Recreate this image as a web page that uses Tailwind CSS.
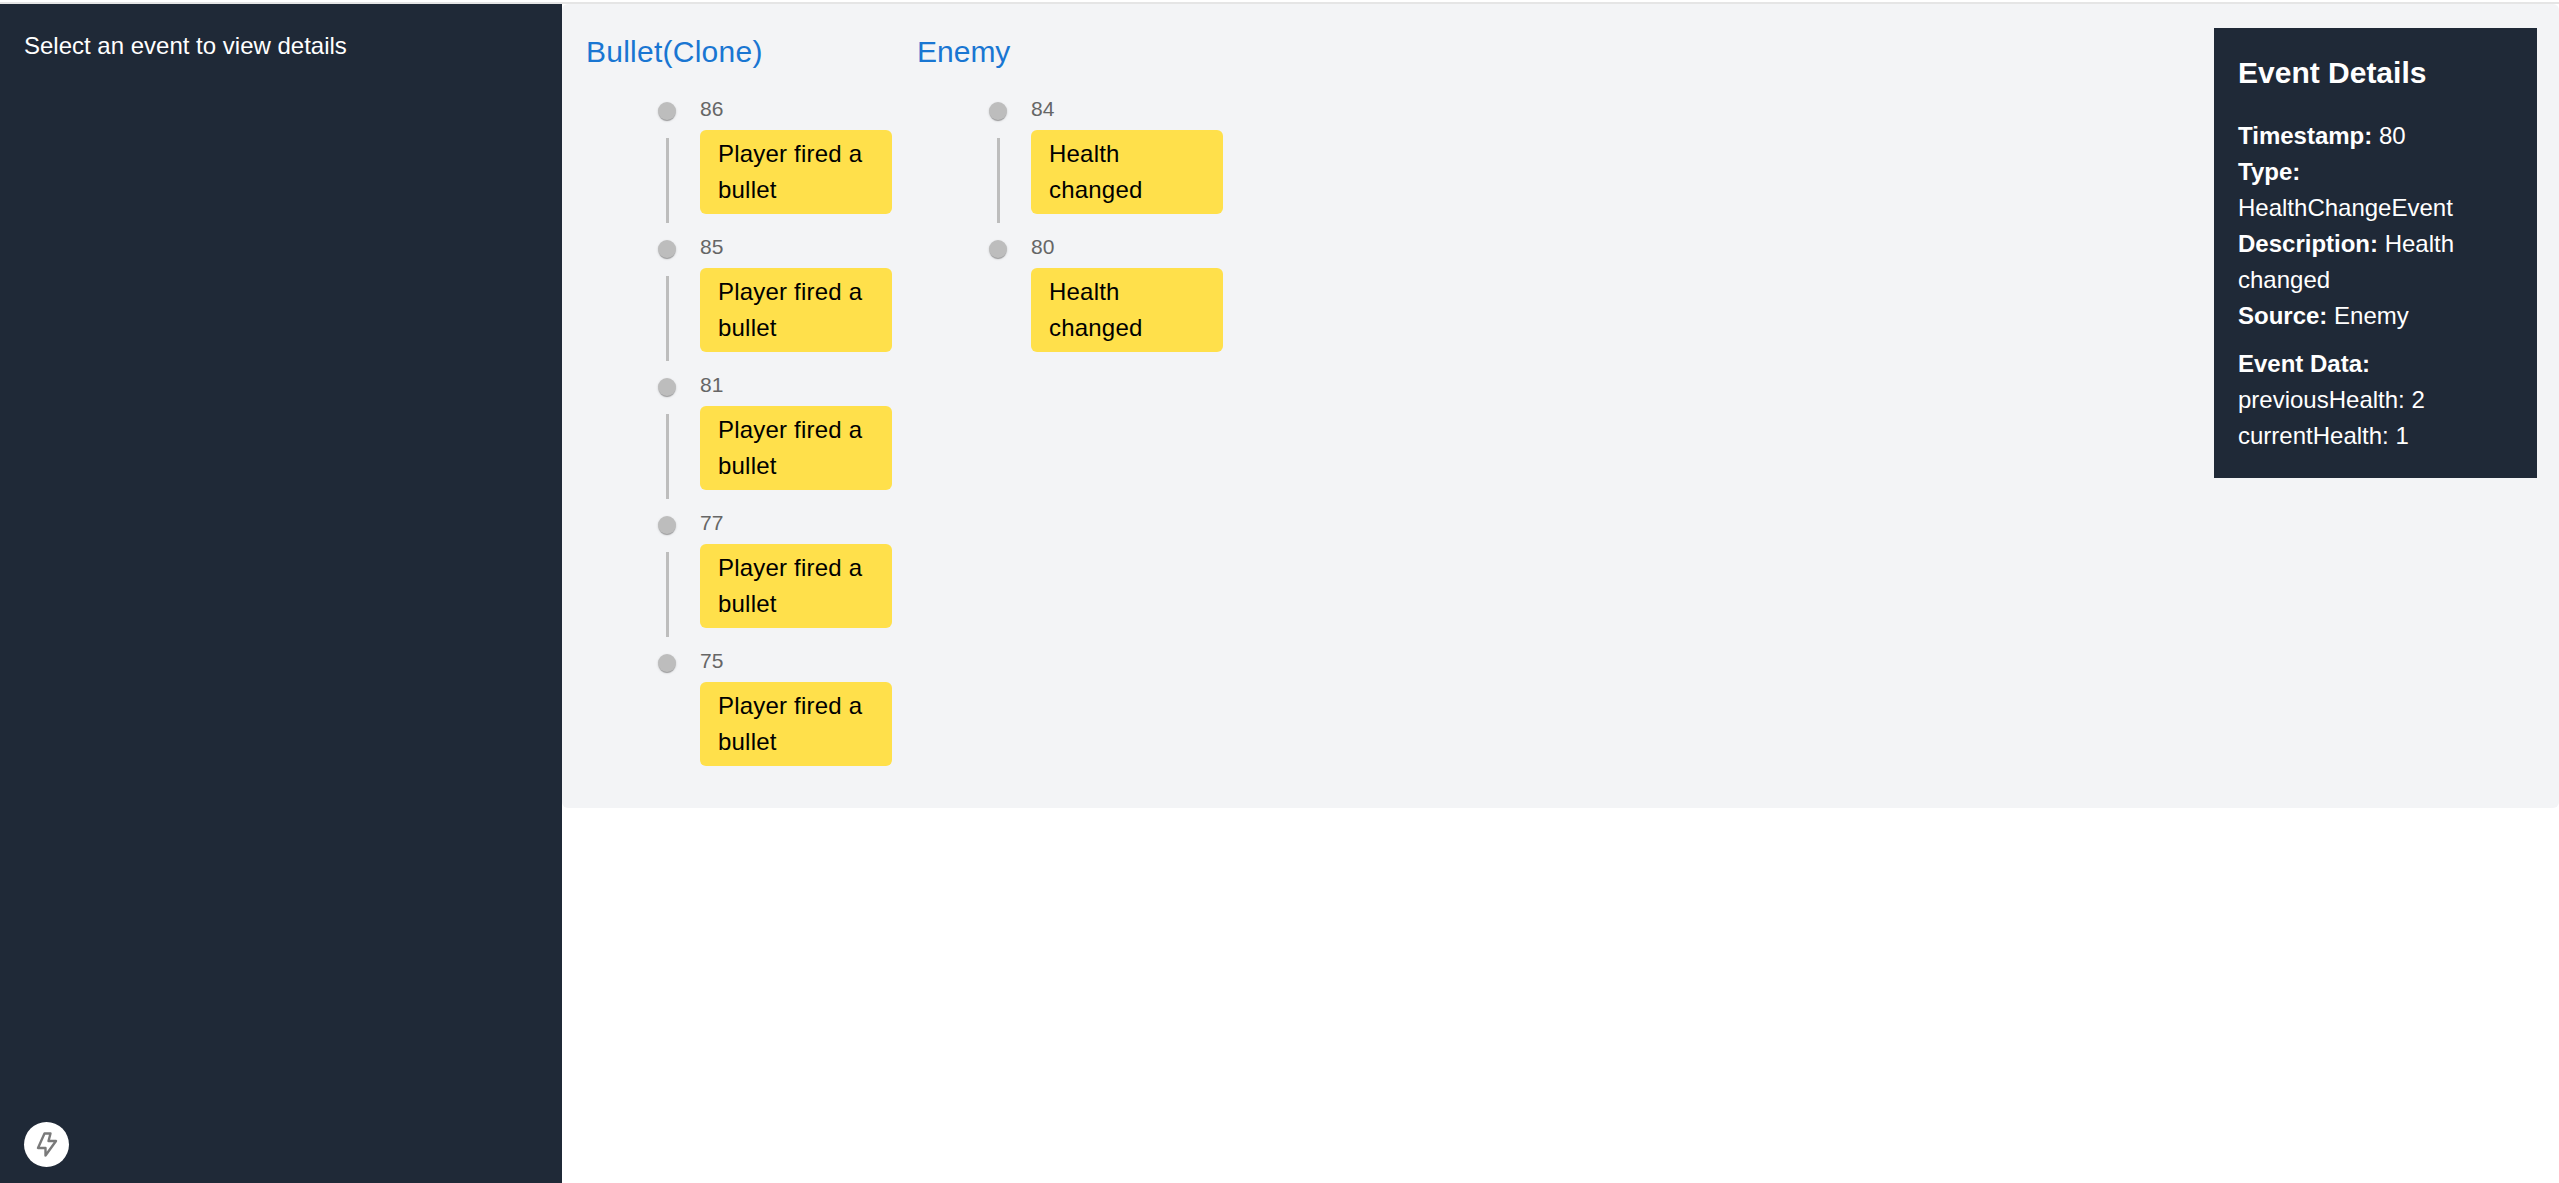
<!DOCTYPE html>
<html>
<head>
<meta charset="utf-8">
<script src="https://cdn.jsdelivr.net/npm/@tailwindcss/browser@4"></script>
</head>
<body class="bg-white font-['Liberation_Sans',Arial,sans-serif] text-[24px] leading-[36px]">
<div class="h-[1183px] overflow-hidden pt-[2px]">
  <div class="h-[2px] bg-[#e5e5e5]"></div>
  <div class="flex h-[1179px] items-start">
    <aside class="relative h-full w-[562px] shrink-0 bg-[#1f2937] p-[24px] text-white">
      <p>Select an event to view details</p>
      <div class="absolute left-[24px] top-[1118px] flex h-[45px] w-[45px] items-center justify-center rounded-full bg-white">
        <svg width="45" height="45" viewBox="0 0 45 45" fill="none" stroke="#7a7a7a" stroke-width="2.4" stroke-linejoin="round" stroke-linecap="round"><path d="M20.5 11.5 14 26H21.5L21.5 33.5 32 19H24.5L26.5 11.5Z"/></svg>
      </div>
    </aside>
    <main class="flex h-[804px] min-w-0 flex-1 justify-between rounded-[6px] bg-[#f3f4f6] pb-[24px] pl-[24px] pr-[22px] pt-[24px]">
      <div class="flex gap-[25px]">
        <section class="w-[306px]">
          <h2 class="pt-[1px] text-[30px] leading-[45px] tracking-[0.25px] text-[#1976d2]">Bullet(Clone)</h2>
          <div class="mt-[18px] flex flex-col">
            <div class="flex h-[138px]"><div class="ml-[72px] flex w-[18px] flex-col items-center pt-[10px]"><span class="h-[18px] w-[18px] shrink-0 rounded-full bg-[#bdbdbd] shadow-[0_2px_1px_-1px_rgba(0,0,0,0.2),0_1px_1px_0_rgba(0,0,0,0.14),0_1px_3px_0_rgba(0,0,0,0.12)]"></span><span class="mt-[18px] h-[85px] w-[3px] bg-[#bdbdbd]"></span></div><div class="ml-[24px] w-[192px]"><div class="pt-[1px] text-[21px] leading-[31px] text-[#666]">86</div><div class="mt-[6px] rounded-[6px] bg-[#ffe04b] px-[18px] py-[6px] tracking-[0.2px] text-black">Player fired a bullet</div></div></div>
            <div class="flex h-[138px]"><div class="ml-[72px] flex w-[18px] flex-col items-center pt-[10px]"><span class="h-[18px] w-[18px] shrink-0 rounded-full bg-[#bdbdbd] shadow-[0_2px_1px_-1px_rgba(0,0,0,0.2),0_1px_1px_0_rgba(0,0,0,0.14),0_1px_3px_0_rgba(0,0,0,0.12)]"></span><span class="mt-[18px] h-[85px] w-[3px] bg-[#bdbdbd]"></span></div><div class="ml-[24px] w-[192px]"><div class="pt-[1px] text-[21px] leading-[31px] text-[#666]">85</div><div class="mt-[6px] rounded-[6px] bg-[#ffe04b] px-[18px] py-[6px] tracking-[0.2px] text-black">Player fired a bullet</div></div></div>
            <div class="flex h-[138px]"><div class="ml-[72px] flex w-[18px] flex-col items-center pt-[10px]"><span class="h-[18px] w-[18px] shrink-0 rounded-full bg-[#bdbdbd] shadow-[0_2px_1px_-1px_rgba(0,0,0,0.2),0_1px_1px_0_rgba(0,0,0,0.14),0_1px_3px_0_rgba(0,0,0,0.12)]"></span><span class="mt-[18px] h-[85px] w-[3px] bg-[#bdbdbd]"></span></div><div class="ml-[24px] w-[192px]"><div class="pt-[1px] text-[21px] leading-[31px] text-[#666]">81</div><div class="mt-[6px] rounded-[6px] bg-[#ffe04b] px-[18px] py-[6px] tracking-[0.2px] text-black">Player fired a bullet</div></div></div>
            <div class="flex h-[138px]"><div class="ml-[72px] flex w-[18px] flex-col items-center pt-[10px]"><span class="h-[18px] w-[18px] shrink-0 rounded-full bg-[#bdbdbd] shadow-[0_2px_1px_-1px_rgba(0,0,0,0.2),0_1px_1px_0_rgba(0,0,0,0.14),0_1px_3px_0_rgba(0,0,0,0.12)]"></span><span class="mt-[18px] h-[85px] w-[3px] bg-[#bdbdbd]"></span></div><div class="ml-[24px] w-[192px]"><div class="pt-[1px] text-[21px] leading-[31px] text-[#666]">77</div><div class="mt-[6px] rounded-[6px] bg-[#ffe04b] px-[18px] py-[6px] tracking-[0.2px] text-black">Player fired a bullet</div></div></div>
            <div class="flex h-[138px]"><div class="ml-[72px] flex w-[18px] flex-col items-center pt-[10px]"><span class="h-[18px] w-[18px] shrink-0 rounded-full bg-[#bdbdbd] shadow-[0_2px_1px_-1px_rgba(0,0,0,0.2),0_1px_1px_0_rgba(0,0,0,0.14),0_1px_3px_0_rgba(0,0,0,0.12)]"></span></div><div class="ml-[24px] w-[192px]"><div class="pt-[1px] text-[21px] leading-[31px] text-[#666]">75</div><div class="mt-[6px] rounded-[6px] bg-[#ffe04b] px-[18px] py-[6px] tracking-[0.2px] text-black">Player fired a bullet</div></div></div>
          </div>
        </section>
        <section class="w-[306px]">
          <h2 class="pt-[1px] text-[30px] leading-[45px] text-[#1976d2]">Enemy</h2>
          <div class="mt-[18px] flex flex-col">
            <div class="flex h-[138px]"><div class="ml-[72px] flex w-[18px] flex-col items-center pt-[10px]"><span class="h-[18px] w-[18px] shrink-0 rounded-full bg-[#bdbdbd] shadow-[0_2px_1px_-1px_rgba(0,0,0,0.2),0_1px_1px_0_rgba(0,0,0,0.14),0_1px_3px_0_rgba(0,0,0,0.12)]"></span><span class="mt-[18px] h-[85px] w-[3px] bg-[#bdbdbd]"></span></div><div class="ml-[24px] w-[192px]"><div class="pt-[1px] text-[21px] leading-[31px] text-[#666]">84</div><div class="mt-[6px] rounded-[6px] bg-[#ffe04b] px-[18px] py-[6px] tracking-[0.2px] text-black">Health changed</div></div></div>
            <div class="flex h-[138px]"><div class="ml-[72px] flex w-[18px] flex-col items-center pt-[10px]"><span class="h-[18px] w-[18px] shrink-0 rounded-full bg-[#bdbdbd] shadow-[0_2px_1px_-1px_rgba(0,0,0,0.2),0_1px_1px_0_rgba(0,0,0,0.14),0_1px_3px_0_rgba(0,0,0,0.12)]"></span></div><div class="ml-[24px] w-[192px]"><div class="pt-[1px] text-[21px] leading-[31px] text-[#666]">80</div><div class="mt-[6px] rounded-[6px] bg-[#ffe04b] px-[18px] py-[6px] tracking-[0.2px] text-black">Health changed</div></div></div>
          </div>
        </section>
      </div>
      <div class="h-[450px] w-[323px] bg-[#1f2937] p-[24px] text-white">
        <h3 class="mb-[25px] text-[30px] font-bold leading-[41px]">Event Details</h3>
        <p><strong>Timestamp:</strong> 80</p>
        <p><strong>Type:</strong> HealthChangeEvent</p>
        <p><strong>Description:</strong> Health changed</p>
        <p><strong>Source:</strong> Enemy</p>
        <p class="mt-[12px]"><strong>Event Data:</strong></p>
        <p>previousHealth: 2</p>
        <p>currentHealth: 1</p>
      </div>
    </main>
  </div>
</div>
</body>
</html>
